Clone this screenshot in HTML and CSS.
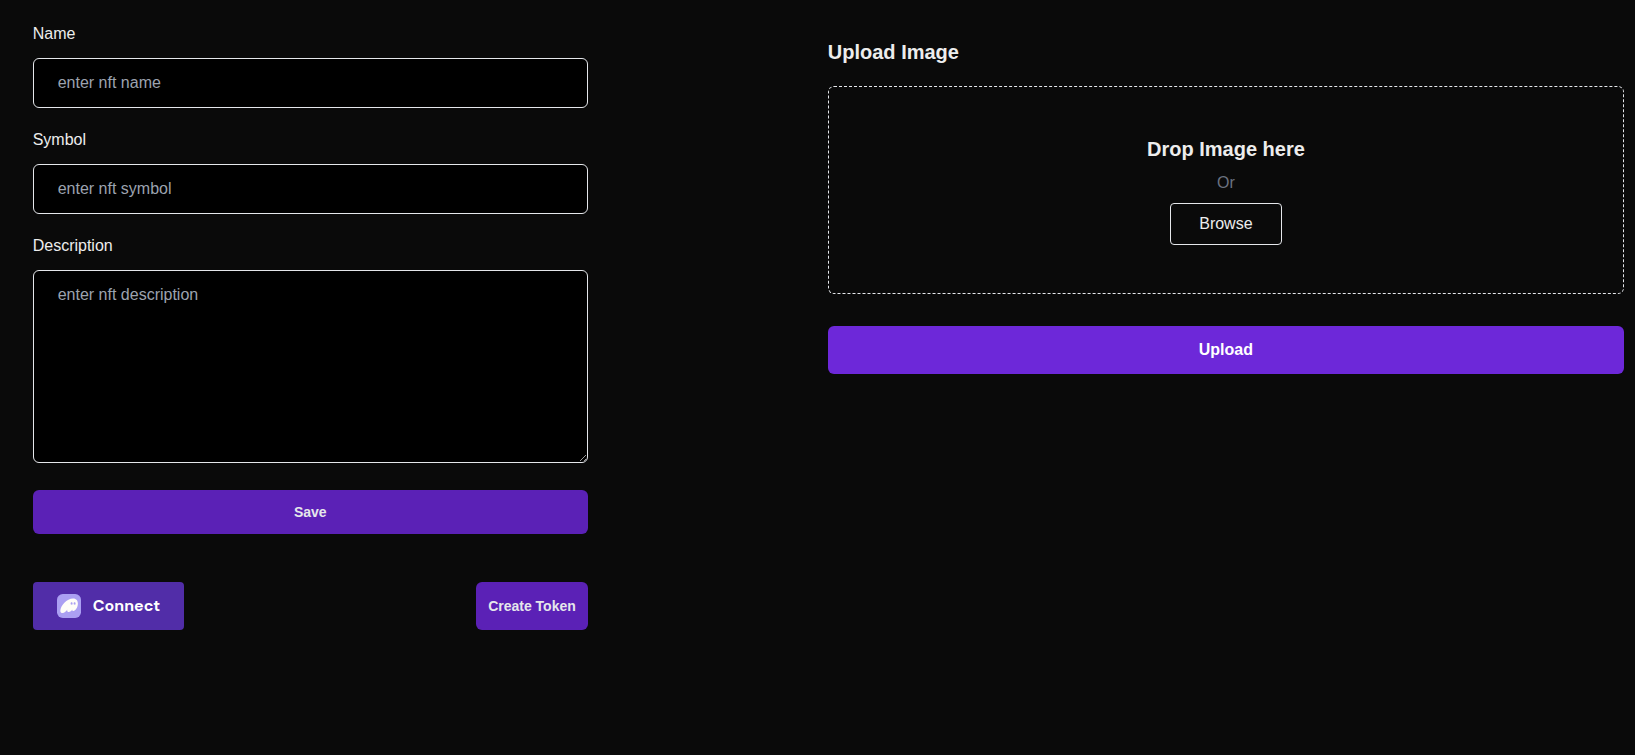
FILE: index.html
```html
<!DOCTYPE html>
<html lang="en">
<head>
<meta charset="utf-8">
<meta name="viewport" content="width=device-width, initial-scale=1">
<title>Create NFT</title>
<link rel="stylesheet" href="styles.css">
</head>
<body>
<main class="page">
  <form class="details">
    <div class="field">
      <label for="name">Name</label>
      <input class="control" id="name" type="text" placeholder="enter nft name">
    </div>
    <div class="field">
      <label for="symbol">Symbol</label>
      <input class="control" id="symbol" type="text" placeholder="enter nft symbol">
    </div>
    <div class="field">
      <label for="description">Description</label>
      <textarea class="control control-area" id="description" placeholder="enter nft description"></textarea>
    </div>
    <button class="btn btn-save" type="button">Save</button>
    <div class="actions">
      <button class="btn-wallet" type="button">
        <svg class="wallet-icon" viewBox="0 0 108 108" aria-hidden="true">
          <rect width="108" height="108" rx="26" fill="#ab9ff2"/>
          <path fill="#fffdf8" fill-rule="evenodd" d="M46.5267 69.9229C42.0054 76.8509 34.4292 85.6182 24.348 85.6182C19.5824 85.6182 15 83.6563 15 75.1342C15 53.4305 44.6326 19.8327 72.1268 19.8327C87.768 19.8327 94 30.6846 94 43.0079C94 58.8258 83.7355 76.9122 73.5321 76.9122C70.2939 76.9122 68.7053 75.1342 68.7053 72.314C68.7053 71.5783 68.8275 70.7812 69.0719 69.9229C65.5893 75.8699 58.8685 81.3878 52.5754 81.3878C47.993 81.3878 45.6713 78.5063 45.6713 74.4598C45.6713 72.9884 45.9768 71.4556 46.5267 69.9229ZM83.6761 42.5794C83.6761 46.1704 81.5575 47.9658 79.1875 47.9658C76.7816 47.9658 74.6989 46.1704 74.6989 42.5794C74.6989 38.9885 76.7816 37.1931 79.1875 37.1931C81.5575 37.1931 83.6761 38.9885 83.6761 42.5794ZM70.2103 42.5795C70.2103 46.1704 68.0916 47.9658 65.7216 47.9658C63.3157 47.9658 61.233 46.1704 61.233 42.5795C61.233 38.9885 63.3157 37.1931 65.7216 37.1931C68.0916 37.1931 70.2103 38.9885 70.2103 42.5795Z"/>
        </svg>
        Connect
      </button>
      <button class="btn btn-create" type="button">Create Token</button>
    </div>
  </form>
  <section class="upload">
    <h2 class="heading">Upload Image</h2>
    <div class="dropzone">
      <h3 class="heading">Drop Image here</h3>
      <p class="or">Or</p>
      <button class="btn-browse" type="button">Browse</button>
    </div>
    <button class="btn btn-upload" type="button">Upload</button>
  </section>
</main>
</body>
</html>
```
FILE: styles.css
```css
*, *::before, *::after { box-sizing: border-box; }

body {
  margin: 0;
  background: #0a0a0a;
  color: #ededed;
  font: 16px/24px "Liberation Sans", Arial, sans-serif;
}

button, input, textarea { font: inherit; color: inherit; }
button { cursor: pointer; }
h2, h3, p { margin: 0; }

.page {
  display: grid;
  grid-template-columns: 555fr 796fr;
  gap: 240px;
  align-items: start;
  padding: 0 11px 0 2%;
}

.details {
  display: flex;
  flex-direction: column;
  padding-top: 22px;
}

.field {
  display: flex;
  flex-direction: column;
  gap: 12px;
  margin-bottom: 20px;
}

.control {
  width: 100%;
  padding: 12px 24px;
  border: 1px solid #e5e7eb;
  border-radius: 6px;
  background: #000;
}
.control::placeholder { color: #9ca3af; opacity: 1; }
.control-area { display: block; height: 193px; resize: vertical; }

.btn {
  border: 0;
  border-radius: 6px;
  padding: 12px;
  background: #5b21b6;
  color: #e5e7eb;
  font-weight: 700;
}

.btn-save { margin-top: 7px; font-size: 14px; line-height: 20px; }

.actions {
  display: flex;
  justify-content: space-between;
  margin-top: 48px;
}

.btn-create { font-size: 14px; }

.btn-wallet {
  display: flex;
  align-items: center;
  gap: 12px;
  height: 48px;
  padding: 0 24px;
  border: 0;
  border-radius: 4px;
  background: #512da8;
  color: #fff;
  font-family: "DM Sans", Inter, sans-serif;
  font-weight: 700;
}
.wallet-icon { width: 24px; height: 24px; }

.upload {
  display: flex;
  flex-direction: column;
  padding-top: 38px;
}

.heading { font-size: 20px; line-height: 28px; font-weight: 700; }

.dropzone {
  display: flex;
  flex-direction: column;
  align-items: center;
  gap: 8px;
  margin: 20px 0 32px;
  padding: 48px;
  border: 1px dashed #e5e7eb;
  border-radius: 6px;
}

.or { color: #6b7280; }

.btn-browse {
  padding: 8px 28px;
  border: 1px solid #e5e7eb;
  border-radius: 4px;
  background: transparent;
}

.btn-upload { background: #6d28d9; color: #fff; }
```
